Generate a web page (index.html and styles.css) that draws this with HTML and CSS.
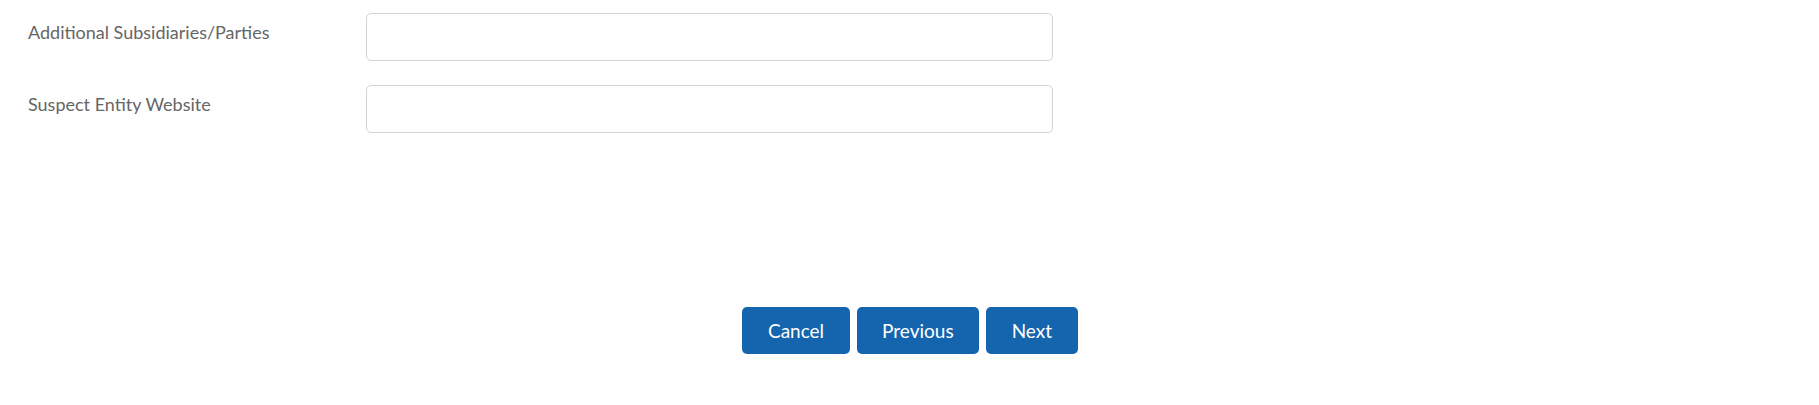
FILE: index.html
```html
<!DOCTYPE html>
<html>
<head>
<meta charset="utf-8">
<link rel="stylesheet" href="styles.css">
</head>
<body>
<div class="page">
  <form class="form">
    <div class="row">
      <label class="label">Additional Subsidiaries/Parties</label>
      <input class="input" type="text">
    </div>
    <div class="row">
      <label class="label">Suspect Entity Website</label>
      <input class="input" type="text">
    </div>
  </form>
  <div class="actions">
    <button class="btn" type="button">Cancel</button>
    <button class="btn" type="button">Previous</button>
    <button class="btn" type="button">Next</button>
  </div>
</div>
</body>
</html>
```
FILE: styles.css
```css
html, body {
  margin: 0;
  padding: 0;
  background: #fff;
}
body {
  font-family: Lato, "Open Sans", sans-serif;
}
.page {
  padding: 13px 0 0 0;
}
.form {
  display: flex;
  flex-direction: column;
  gap: 24px;
}
.row {
  display: grid;
  grid-template-columns: 366px 687px;
  align-items: start;
}
.label {
  padding-left: 28px;
  padding-top: 7px;
  font-size: 18px;
  line-height: 24px;
  color: #666;
}
.input {
  box-sizing: border-box;
  width: 687px;
  height: 48px;
  margin: 0;
  border: 1px solid #d4d4d4;
  border-radius: 5px;
  background: #fff;
  outline: none;
}
.actions {
  display: flex;
  justify-content: center;
  gap: 7px;
  margin-top: 174px;
  padding-left: 1px;
}
.btn {
  font-family: Lato, sans-serif;
  font-size: 19px;
  color: #fff;
  background: #1565ae;
  border: none;
  border-radius: 5px;
  height: 47px;
  padding: 0 25.5px;
  margin: 0;
}
```
